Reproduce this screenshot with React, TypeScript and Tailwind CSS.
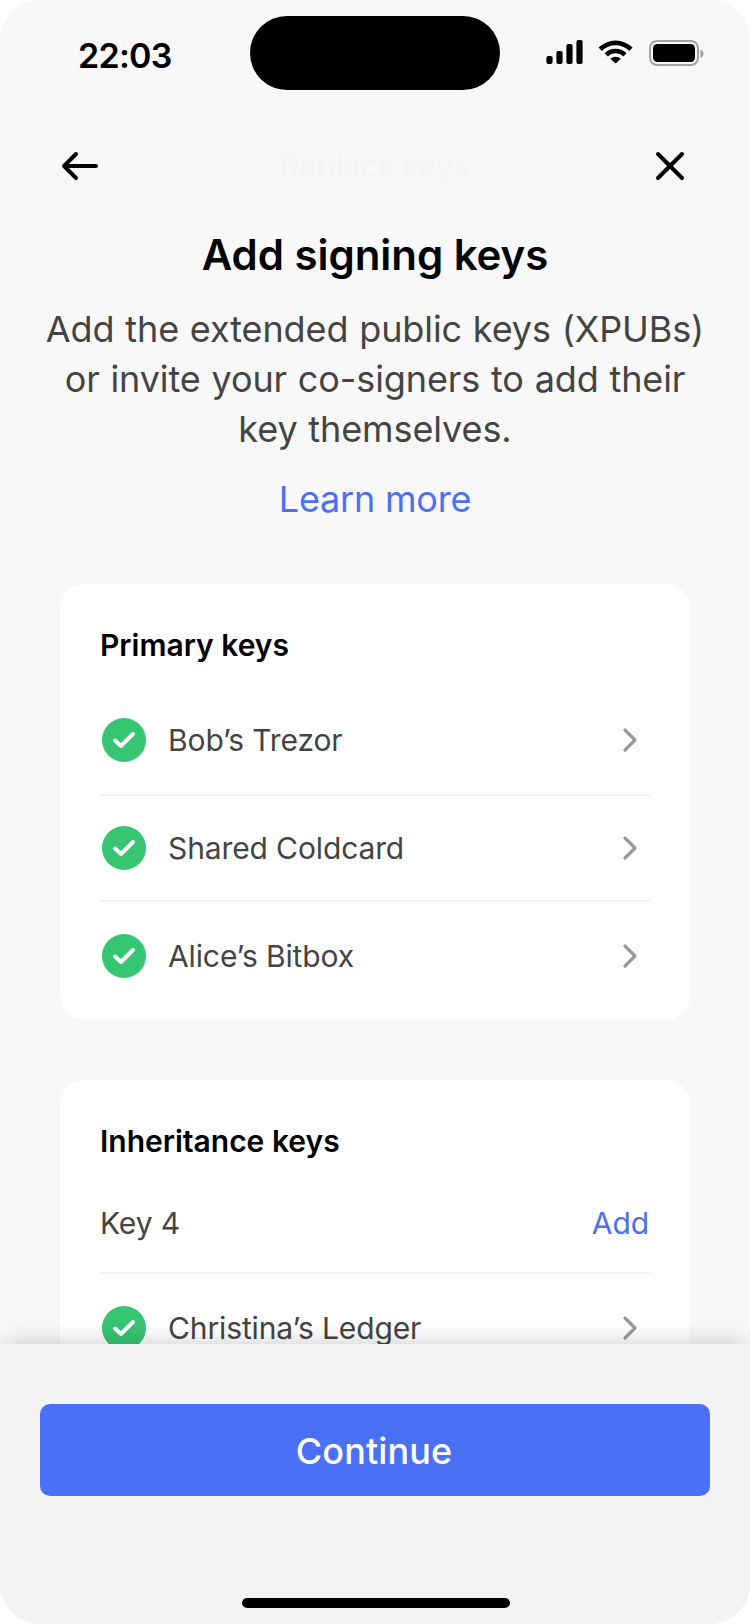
import { ReactNode } from "react";

function StatusBar() {
  return (
    <div className="flex h-[106px] items-start pl-[78px]">
      <div className="w-[172px] pt-[36px] text-[34px] leading-[40px] font-semibold tracking-[-0.7px] text-black">22:03</div>
      <div className="mt-[16px] h-[74px] w-[250px] rounded-[37px] bg-black" />
      <svg className="mt-[38px] ml-[46px] h-[30px] w-[160px]" viewBox="0 0 160 30">
        <rect x="0.4" y="18" width="6.2" height="8" rx="2" />
        <rect x="10.4" y="13" width="6.2" height="13" rx="2" />
        <rect x="20.4" y="6" width="6.2" height="20" rx="2" />
        <rect x="30.4" y="2" width="6.2" height="24" rx="2" />
        <path d="M52.6 9.6 A24 24 0 0 1 86.6 9.6 L83.3 13 A19.2 19.2 0 0 0 55.9 13 Z" />
        <path d="M58.6 15.2 A16 16 0 0 1 80.6 15.2 L77.3 18.5 A11 11 0 0 0 61.9 18.5 Z" />
        <path d="M64.4 20.7 A8 8 0 0 1 74.8 20.7 L69.6 25.6 Z" />
        <rect x="104" y="3" width="48" height="24" rx="7" fill="none" stroke="#a3a3a3" strokeWidth="2" />
        <rect x="107" y="6" width="42" height="18" rx="4.5" />
        <path d="M154.4 11.5 C158.6 12.6 158.6 18.9 154.4 20 Z" fill="#a3a3a3" />
      </svg>
    </div>
  );
}

function NavBar() {
  return (
    <div className="flex h-[120px] items-center justify-between pr-[64px] pl-[60px]">
      <svg className="h-[40px] w-[40px]" viewBox="0 0 40 40" fill="none" stroke="#000" strokeWidth="4" strokeLinecap="round" strokeLinejoin="round">
        <path d="M36 20H4M16 8L4 20L16 32" />
      </svg>
      <div className="pr-[4px] text-[30px] font-medium text-[#f5f5f5]">Replace keys</div>
      <svg className="h-[32px] w-[32px]" viewBox="0 0 32 32" fill="none" stroke="#000" strokeWidth="4" strokeLinecap="round">
        <path d="M4 4L28 28M28 4L4 28" />
      </svg>
    </div>
  );
}

function Check() {
  return (
    <svg className="ml-[2px] h-[44px] w-[44px]" viewBox="0 0 44 44" fill="none">
      <circle cx="22" cy="22" r="22" fill="#36c571" />
      <path d="M13 22.6L19 28L31 16" stroke="#fff" strokeWidth="4" strokeLinecap="round" strokeLinejoin="round" />
    </svg>
  );
}

function KeyRow({ name, size }: { name: string; size: string }) {
  return (
    <div className={`flex items-center text-[30px] tracking-[-0.12px] text-[#444] ${size}`}>
      <Check />
      <span className="ml-[22px] flex-1">{name}</span>
      <svg className="mr-[10px] h-[28px] w-[20px]" viewBox="0 0 20 28" fill="none" stroke="#999" strokeWidth="3.2" strokeLinecap="round" strokeLinejoin="round">
        <path d="M5 4L15 14L5 24" />
      </svg>
    </div>
  );
}

function Divider() {
  return <div className="h-[2px] bg-[#f3f3f3]" />;
}

function Card({ title, gap, children }: { title: string; gap: string; children: ReactNode }) {
  return (
    <section className="mx-[60px] rounded-[24px] bg-white px-[40px] pt-[43px] pb-[10px]">
      <h2 className={`text-[30px] leading-[36px] font-semibold text-black ${gap}`}>{title}</h2>
      {children}
    </section>
  );
}

export default function App() {
  return (
    <div className="flex h-[1624px] w-[750px] flex-col overflow-hidden rounded-[40px] bg-[#f8f8f8] font-['Inter',sans-serif]">
      <div className="h-[1344px] shrink-0 overflow-hidden">
        <StatusBar />
        <NavBar />
        <div className="-mt-px text-center">
          <h1 className="text-[42px] leading-[60px] font-semibold tracking-[-0.05px] text-black">Add signing keys</h1>
          <p className="mt-[19px] text-[36px] leading-[50px] tracking-[-0.1px] whitespace-nowrap text-[#444] [word-spacing:0.8px]">
            Add the extended public keys (XPUBs)
            <br />
            or invite your co-signers to add their
            <br />
            key themselves.
          </p>
          <p className="mt-[20px] text-[36px] leading-[50px] tracking-[-0.2px] text-[#4a70f5]">Learn more</p>
        </div>
        <div className="flex flex-col gap-[60px] pt-[60px]">
          <Card title="Primary keys" gap="mb-[23px]">
            <KeyRow name="Bob’s Trezor" size="h-[108px]" />
            <Divider />
            <KeyRow name="Shared Coldcard" size="h-[104px]" />
            <Divider />
            <KeyRow name="Alice’s Bitbox" size="h-[108px]" />
          </Card>
          <Card title="Inheritance keys" gap="mb-[15px]">
            <div className="flex h-[98px] items-center justify-between text-[30px] tracking-[-0.1px]">
              <span className="text-[#444]">Key 4</span>
              <span className="pr-px text-[#4a70f5]">Add</span>
            </div>
            <Divider />
            <KeyRow name="Christina’s Ledger" size="h-[108px]" />
          </Card>
        </div>
      </div>
      <footer className="relative flex h-[280px] shrink-0 flex-col items-center bg-[#f3f3f3] px-[40px] pt-[60px] shadow-[0_-4px_24px_-6px_rgba(0,0,0,0.25)]">
        <button className="h-[92px] w-full rounded-[10px] bg-[#4a70f5] pt-px pr-[2px] text-[36px] font-medium tracking-[0.1px] text-white">Continue</button>
        <div className="mt-[102px] ml-[2px] h-[10px] w-[268px] rounded-full bg-black" />
      </footer>
    </div>
  );
}
